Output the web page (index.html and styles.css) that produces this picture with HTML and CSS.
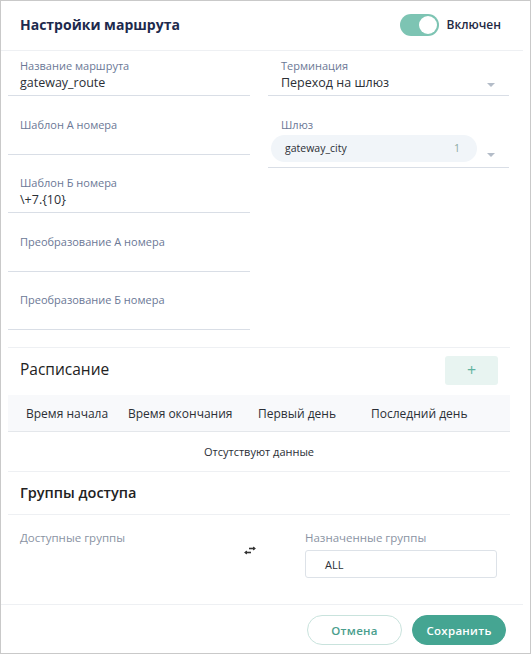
FILE: index.html
```html
<!DOCTYPE html>
<html lang="ru">
<head>
<meta charset="utf-8">
<title>Настройки маршрута</title>
<link rel="stylesheet" href="styles.css">
</head>
<body>
<div class="panel">
  <div class="main">
    <div class="header">
      <div class="title">Настройки маршрута</div>
      <div class="toggle-wrap">
        <span class="toggle"><span class="knob"></span></span>
        <span class="toggle-label">Включен</span>
      </div>
    </div>
    <div class="content">
      <div class="form">
        <div class="col">
          <div class="field">
            <div class="label">Название маршрута</div>
            <div class="value">gateway_route</div>
          </div>
          <div class="field">
            <div class="label">Шаблон А номера</div>
            <div class="value"></div>
          </div>
          <div class="field">
            <div class="label">Шаблон Б номера</div>
            <div class="value">\+7.{10}</div>
          </div>
          <div class="field">
            <div class="label">Преобразование А номера</div>
            <div class="value"></div>
          </div>
          <div class="field">
            <div class="label">Преобразование Б номера</div>
            <div class="value"></div>
          </div>
        </div>
        <div class="col">
          <div class="field select">
            <div class="label">Терминация</div>
            <div class="value">Переход на шлюз</div>
            <span class="arrow a1"></span>
          </div>
          <div class="field select chipfield">
            <div class="label">Шлюз</div>
            <div class="chip"><span>gateway_city</span><span class="count">1</span></div>
            <span class="arrow a2"></span>
          </div>
        </div>
      </div>

      <div class="section-head">
        <div class="section-title">Расписание</div>
        <button class="add">+</button>
      </div>
      <div class="table">
        <div class="thead">
          <div class="th">Время начала</div>
          <div class="th">Время окончания</div>
          <div class="th">Первый день</div>
          <div class="th">Последний день</div>
        </div>
        <div class="empty">Отсутствуют данные</div>
      </div>

      <div class="groups-head">Группы доступа</div>
      <div class="groups">
        <div class="gcol gleft">
          <div class="glabel">Доступные группы</div>
        </div>
        <div class="gmid">
          <svg class="swap" width="14" height="10" viewBox="0 0 14 10">
            <path d="M6 2.5h6" stroke="#333" stroke-width="1.6"/>
            <path d="M10 0.5l3 2-3 2z" fill="#333"/>
            <path d="M2 6.5h6" stroke="#333" stroke-width="1.6"/>
            <path d="M4 4.5l-3 2 3 2z" fill="#333"/>
          </svg>
        </div>
        <div class="gcol gright">
          <div class="glabel">Назначенные группы</div>
          <div class="gbox">ALL</div>
        </div>
      </div>
    </div>
    <div class="footer">
      <button class="btn cancel">Отмена</button>
      <button class="btn save">Сохранить</button>
    </div>
  </div>
</div>
</body>
</html>
```

FILE: styles.css
```css
* { box-sizing: border-box; }
html, body { margin: 0; padding: 0; background: #fff; }
body { font-family: "Open Sans", "Noto Sans", sans-serif; color: #2b2f36; }

.panel {
  width: 531px;
  height: 654px;
  border: 1px solid #c9c9c9;
  background: #fff;
  overflow: hidden;
}
.main { width: 522px; }

.header {
  height: 50px;
  border-bottom: 1px solid #eef0f3;
  display: flex;
  align-items: center;
  justify-content: space-between;
  padding: 0 22px 2px 19px;
}
.title { font-size: 14px; font-weight: 700; color: #1d2a4d; }
.toggle-wrap { display: flex; align-items: center; }
.toggle {
  width: 39px; height: 22px; border-radius: 11px;
  background: #7dc4b3; position: relative; display: inline-block;
}
.knob {
  position: absolute; right: 2px; top: 2px;
  width: 18px; height: 18px; border-radius: 50%; background: #fff;
}
.toggle-label { margin-left: 7px; font-size: 12px; font-weight: 600; color: #1f2a44; }

.content { padding: 0 13px 0 7px; }

.form {
  display: grid;
  grid-template-columns: 242px 241px;
  column-gap: 18px;
  padding-bottom: 17px;
  border-bottom: 1px solid #eef0f3;
}
.field {
  padding: 7px 0 3px 12px;
  border-bottom: 1px solid #d9dee6;
  margin-bottom: 13.5px;
  position: relative;
}
.col:first-child .field:last-child { margin-bottom: 0; }
.label { font-size: 11px; line-height: 16px; color: #6b7896; }
.value { font-size: 12.5px; line-height: 18px; min-height: 18px; color: #2b2f36; }
.select { padding-left: 13px; }
.arrow {
  position: absolute; right: 14px;
  width: 0; height: 0;
  border-left: 4px solid transparent; border-right: 4px solid transparent;
  border-top: 4px solid #b3bcc8;
}
.a1 { top: 32px; }
.chipfield { padding: 7px 0 5px 3px; }
.chipfield .label { padding-left: 10px; }
.chip {
  margin-top: 2px;
  width: 206px; height: 27px; border-radius: 14px;
  background: #f1f5f9;
  display: flex; align-items: center; justify-content: space-between;
  padding: 0 17px 0 14px;
  font-size: 10.5px; color: #2b2f36;
}
.count { color: #8aaaa2; font-size: 10.5px; }
.a2 { top: 43px; }

.section-head {
  display: flex; align-items: center; justify-content: space-between;
  padding: 8px 12px 10px 12px;
}
.section-title { font-size: 15.5px; font-weight: 500; color: #222; margin-top: -4px; }
.add {
  width: 53px; height: 29px; border: none; border-radius: 3px;
  background: #e8f4f1; color: #5fb3a0; font-size: 16px; font-family: inherit;
  padding: 0; line-height: 29px;
}

.table { border-bottom: 1px solid #eef0f3; }
.thead {
  display: grid;
  grid-template-columns: 102px 130px 113px 1fr;
  height: 37px; align-items: center;
  background: #f8f9fb;
  border-bottom: 1px solid #e4e7eb;
}
.th { padding-left: 18px; font-size: 12px; color: #2b2f36; white-space: nowrap; }
.empty {
  height: 39px; display: flex; align-items: center; justify-content: center;
  font-size: 11px; color: #2b2f36; padding-bottom: 1px;
}

.groups-head {
  height: 43px; display: flex; align-items: center;
  padding: 0 12px 1px; border-bottom: 1px solid #eef0f3;
  font-size: 14.5px; font-weight: 600; color: #222;
}
.groups { display: flex; padding: 15px 12px 0; height: 89px; }
.gleft { width: 210px; }
.gmid { width: 40px; display: flex; justify-content: center; padding-top: 16px; }
.gright { width: 192px; margin-left: 35px; }
.glabel { font-size: 11.5px; line-height: 16px; color: #8a93a3; }
.gbox {
  margin-top: 4px; height: 28px; border: 1px solid #dde2e8; border-radius: 3px;
  display: flex; align-items: center; padding-left: 19px;
  font-size: 11px; color: #2b2f36;
}

.footer {
  border-top: 1px solid #eef0f3;
  display: flex; justify-content: flex-end; gap: 10px;
  padding: 10px 17px 0 0;
}
.btn {
  height: 30px; border-radius: 15px; font-family: inherit;
  font-size: 11.5px; font-weight: 600; letter-spacing: 0.3px; padding: 0;
}
.cancel { width: 95px; background: #fff; border: 1px solid #c9e3dd; color: #4a9e8d; }
.save { width: 94px; background: #45a592; border: 1px solid #45a592; color: #fff; font-size: 11.5px; }
```
